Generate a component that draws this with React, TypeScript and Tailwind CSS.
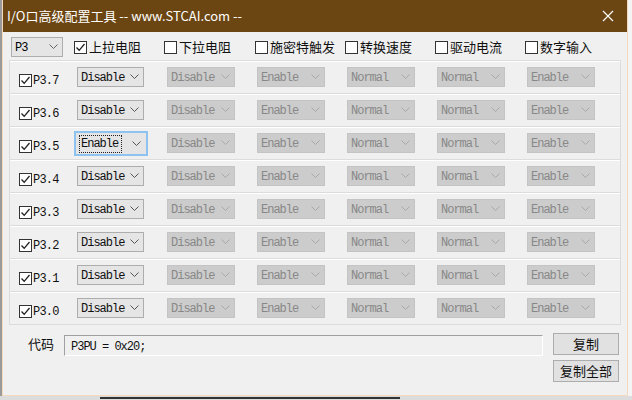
import React from "react";

const cjk = { fontFamily: '"Noto Sans CJK SC", "Noto Sans", sans-serif' };
const mono = { fontFamily: '"Liberation Mono", "Noto Sans CJK SC", monospace' };

const pins = ["7", "6", "5", "4", "3", "2", "1", "0"];
const options = ["上拉电阻", "下拉电阻", "施密特触发", "转换速度", "驱动电流", "数字输入"];
const cols = [
  { x: 77 },
  { x: 167, value: "Disable" },
  { x: 257, value: "Enable" },
  { x: 347, value: "Normal" },
  { x: 437, value: "Normal" },
  { x: 527, value: "Enable" },
];
const checkX = [73, 163, 254, 344, 434, 524];

function Chevron({ color }: { color: string }) {
  return (
    <svg width="9" height="6" viewBox="0 0 9 6" className="shrink-0">
      <path d="M0.5 0.5 L4.5 4.5 L8.5 0.5" fill="none" stroke={color} strokeWidth="1" />
    </svg>
  );
}

function CheckBox({ checked }: { checked: boolean }) {
  return (
    <span className="flex h-[13px] w-[13px] shrink-0 items-center justify-center border border-[#333] bg-white">
      {checked && (
        <svg width="11" height="11" viewBox="0 0 11 11">
          <path d="M1.5 5.5 L4.2 8.3 L9.5 2" fill="none" stroke="#222" strokeWidth="1.3" />
        </svg>
      )}
    </span>
  );
}

function Combo({ value, disabled, focused, width = 67 }: { value: string; disabled?: boolean; focused?: boolean; width?: number }) {
  if (focused) {
    return (
      <div className="flex h-[25px] w-[74px] items-center border-2 border-[#8ec2f0] bg-[#e5e5e5] pl-[3px] pr-[4px] text-[12px] tracking-[-1px] text-[#111]" style={mono}>
        <span className="border border-dotted border-[#222] pl-[1px] pr-[3px] pt-[1px] leading-[15px]">{value}</span>
        <span className="ml-auto mr-[1px]">
          <Chevron color="#555" />
        </span>
      </div>
    );
  }
  return (
    <div
      className={
        disabled
          ? "flex h-[20px] items-center border border-[#c4c4c4] bg-[#cccccc] pl-[3px] pr-[4px] text-[12px] tracking-[-1px] text-[#888]"
          : "flex h-[20px] items-center border border-[#adadad] bg-[#e5e5e5] pl-[3px] pr-[4px] text-[12px] tracking-[-1px] text-[#111]"
      }
      style={{ ...mono, width }}
    >
      <span className="pt-[2px]">{value}</span>
      <span className="ml-auto">
        <Chevron color={disabled ? "#a8a8a8" : "#555"} />
      </span>
    </div>
  );
}

export default function App() {
  return (
    <div className="relative h-[400px] w-[632px] overflow-hidden bg-[#f4f4f4]">
      {/* window behind */}
      <div className="absolute left-0 top-0 h-full w-[2px] bg-[#9a9a9a]" />
      <div className="absolute bottom-0 left-0 h-[4px] w-full bg-[#dcdcdc]" />
      <div className="absolute bottom-[1px] left-[100px] h-[2px] w-[300px] bg-[#333]" />

      <div className="absolute left-[2px] top-0 flex h-[396px] w-[626px] flex-col border border-t-0 border-[#f3d9bd] bg-[#f0f0f0]">
        {/* title bar */}
        <div className="flex h-[32px] shrink-0 items-center bg-[#6b4512] pl-[4px] text-white">
          <span className="text-[13px]" style={cjk}>
            I/O口高级配置工具 -- www.STCAI.com --
          </span>
          <svg width="12" height="12" viewBox="0 0 12 12" className="ml-auto mr-[13px]">
            <path d="M1 1 L11 11 M11 1 L1 11" stroke="#fff" strokeWidth="1.2" />
          </svg>
        </div>

        {/* port + option checkboxes */}
        <div className="relative h-[28px] shrink-0">
          <div className="absolute left-[8px] top-[5px] flex h-[20px] w-[52px] items-center border border-[#adadad] bg-[#e5e5e5] pl-[3px] pr-[4px] text-[12px] tracking-[-1px]" style={mono}>
            <span className="pt-[2px]">P3</span>
            <span className="ml-auto">
              <Chevron color="#666" />
            </span>
          </div>
          {options.map((o, i) => (
            <div key={o} className="absolute top-[5px] flex h-[20px] items-center gap-[2px] text-[13px] text-[#111]" style={{ ...cjk, left: checkX[i] - 2 }}>
              <CheckBox checked={i === 0} />
              <span>{o}</span>
            </div>
          ))}
        </div>

        {/* pin rows */}
        <div className="mx-[6px] flex flex-col border-t border-[#dcdcdc]">
          {pins.map((p, r) => (
            <div key={p} className="relative h-[33px] border-x border-b border-[#dcdcdc] shadow-[inset_0_1px_0_#fff]">
              <div className="absolute left-[9px] top-[9px] flex items-center gap-[1px] text-[12px] tracking-[-0.8px] text-[#111]" style={mono}>
                <CheckBox checked />
                <span className="pt-[2px]">P3.{p}</span>
              </div>
              {cols.map((c, i) => {
                const left = c.x - 10;
                if (i === 0) {
                  const value = r === 2 ? "Enable" : "Disable";
                  return (
                    <div key={i} className="absolute" style={r === 2 ? { left: left - 3, top: 4 } : { left, top: 6 }}>
                      <Combo value={value} focused={r === 2} />
                    </div>
                  );
                }
                return (
                  <div key={i} className="absolute top-[6px]" style={{ left }}>
                    <Combo value={c.value!} disabled width={68} />
                  </div>
                );
              })}
            </div>
          ))}
        </div>

        {/* generated code */}
        <div className="relative flex-1">
          <span className="absolute left-[25px] top-[9px] text-[13px] text-[#111]" style={cjk}>
            代码
          </span>
          <div
            className="absolute left-[61px] top-[10px] flex h-[21px] w-[479px] items-center border border-b-white border-l-[#a0a0a0] border-r-white border-t-[#a0a0a0] bg-[#f0f0f0] pl-[6px] pt-[2px] text-[12px] tracking-[-1px] text-[#111]"
            style={mono}
          >
            P3PU = 0x20;
          </div>
          <button className="absolute left-[550px] top-[8px] flex h-[22px] w-[66px] items-center justify-center border border-[#adadad] bg-[#e1e1e1] text-[13px] text-[#111]" style={cjk}>
            复制
          </button>
          <button className="absolute left-[550px] top-[35px] flex h-[22px] w-[66px] items-center justify-center border border-[#adadad] bg-[#e1e1e1] text-[13px] text-[#111]" style={cjk}>
            复制全部
          </button>
        </div>
      </div>
    </div>
  );
}
